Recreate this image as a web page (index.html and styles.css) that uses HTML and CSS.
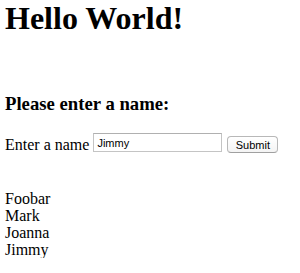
FILE: index.html
```html
<!DOCTYPE html>
<html>
<head>
<meta charset="utf-8">
<link rel="stylesheet" href="styles.css">
</head>
<body>
<div class="page">
  <h1 class="title">Hello World!</h1>
  <h3 class="subtitle">Please enter a name:</h3>
  <form class="name-form">
    <label class="name-label" for="name">Enter a name</label>
    <input class="name-input" id="name" type="text" value="Jimmy">
    <button class="submit-btn" type="button">Submit</button>
  </form>
  <div class="names">
    <div class="name">Foobar</div>
    <div class="name">Mark</div>
    <div class="name">Joanna</div>
    <div class="name">Jimmy</div>
  </div>
</div>
</body>
</html>
```

FILE: styles.css
```css
html, body {
  margin: 0;
  padding: 0;
  background: #ffffff;
}
.page {
  padding-left: 5px;
  font-family: "Liberation Serif", "Times New Roman", serif;
  color: #000;
  font-size: 16px;
  line-height: 18px;
}
.title {
  margin: 0;
  font-size: 32px;
  line-height: 37px;
  font-weight: bold;
}
.subtitle {
  margin: 56px 0 0 0;
  font-size: 18.72px;
  line-height: 22px;
  font-weight: bold;
}
.name-form {
  margin: 18px 0 0 0;
  display: flex;
  align-items: flex-start;
}
.name-label {
  margin-top: 3px;
  margin-right: 4px;
}
.name-input {
  box-sizing: border-box;
  width: 129px;
  height: 19px;
  margin: 0;
  padding: 1px 3px 0 3px;
  border: 1px solid #c4c4c4;
  border-top-color: #b0b0b0;
  border-radius: 0;
  font-family: "Liberation Sans", Arial, sans-serif;
  font-size: 11px;
  color: #000;
  background: #fff;
  outline: none;
}
.submit-btn {
  box-sizing: border-box;
  margin: 3px 0 0 5px;
  width: 51px;
  height: 17px;
  padding: 0;
  border: 1px solid #b8b8b8;
  border-bottom-color: #a0a0a0;
  border-radius: 4px;
  background: linear-gradient(#ffffff, #f4f4f4);
  font-family: "Liberation Sans", Arial, sans-serif;
  font-size: 11px;
  line-height: 14px;
  color: #000;
}
.names {
  margin-top: 36px;
}
.name {
  line-height: 17px;
}
```
